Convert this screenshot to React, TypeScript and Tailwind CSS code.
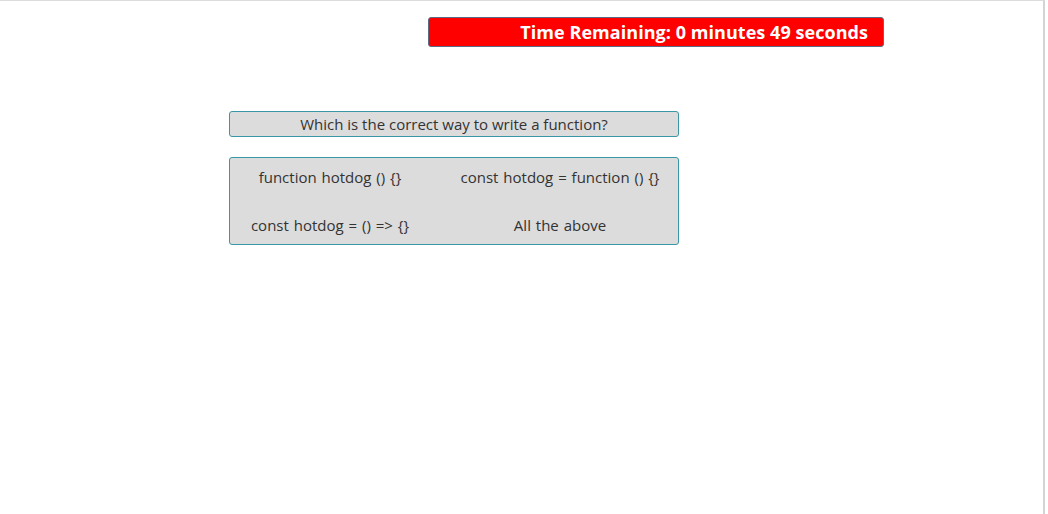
import React from "react";

const font = { fontFamily: '"Open Sans", "Noto Sans", "Liberation Sans", sans-serif' };

export default function App() {
  const answers = [
    "function hotdog () {}",
    "const hotdog = function () {}",
    "const hotdog = () => {}",
    "All the above",
  ];
  return (
    <div className="w-[1048px] h-[514px] bg-white flex" style={font}>
      <div className="w-[1045px] h-full border-t border-[#dcdcdc] border-r-2 border-r-[#d4d4d4] flex flex-col">
        <div className="pt-[16px] pl-[428px]">
          <div className="w-[456px] h-[30px] bg-[#ff0000] border border-[#5c6a86] rounded-[3px] flex items-center justify-end pr-[15px]">
            <span className="text-white font-bold text-[18px] leading-none tracking-[0.05px]">
              Time Remaining: 0 minutes 49 seconds
            </span>
          </div>
        </div>
        <div className="pl-[229px] pt-[64px] flex flex-col gap-[20px]">
          <div className="w-[450px] h-[26px] bg-[#dcdcdc] border border-[#3a97a5] rounded-[3px] flex items-center justify-center">
            <span className="text-[#333] text-[15px]">Which is the correct way to write a function?</span>
          </div>
          <div className="w-[450px] h-[88px] bg-[#dcdcdc] border border-[#3a97a5] rounded-[3px] grid grid-cols-[200px_200px] gap-x-[30px] gap-y-[24px] content-start pt-[7px]">
            {answers.map((a) => (
              <div key={a} className="h-[24px] flex items-center justify-center text-[#333] text-[15px] [word-spacing:1px] whitespace-nowrap">
                {a}
              </div>
            ))}
          </div>
        </div>
      </div>
    </div>
  );
}
